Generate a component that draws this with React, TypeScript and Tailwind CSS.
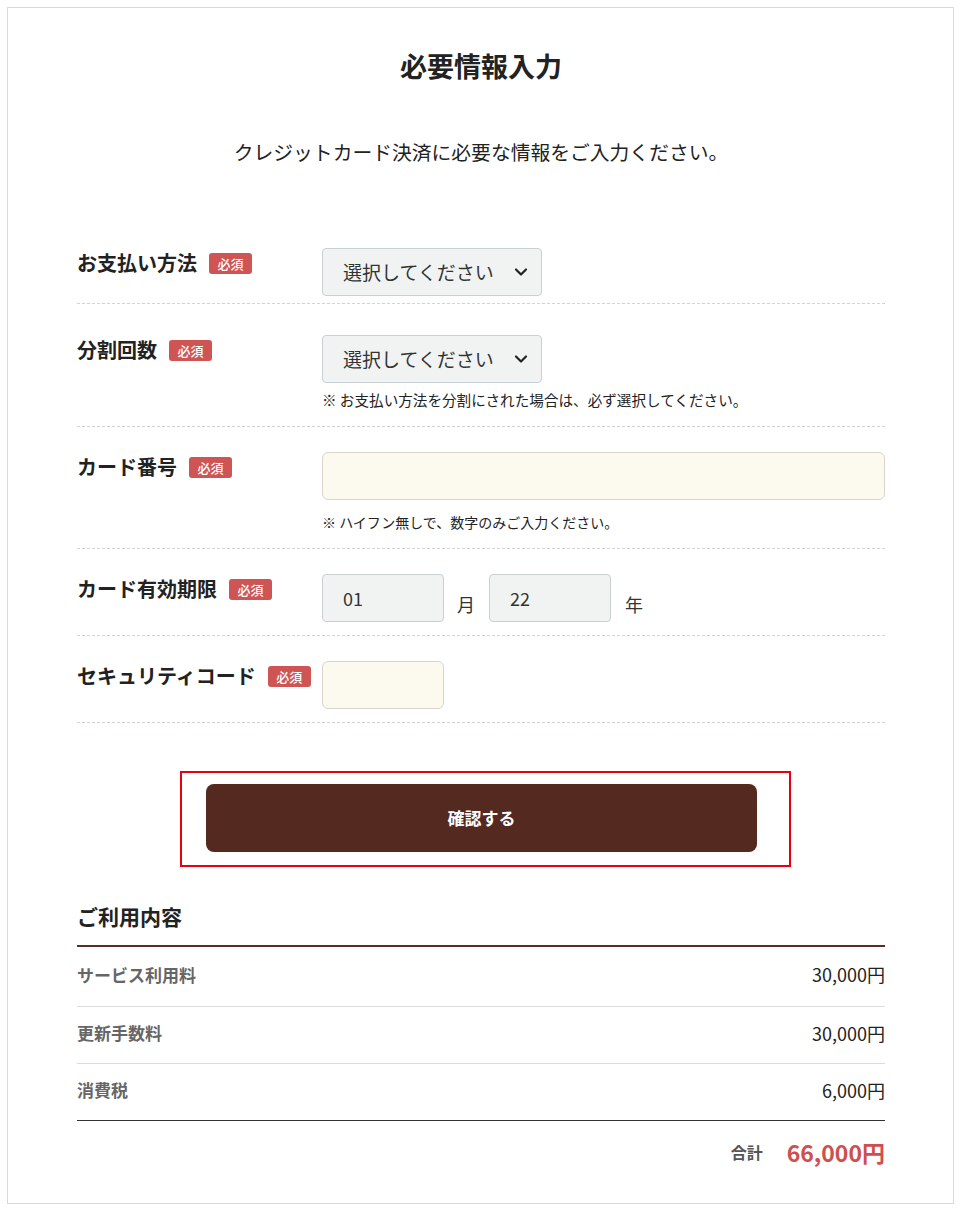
import React from 'react'
import { ChevronDown } from 'lucide-react'

function Badge() {
  return (
    <span className="inline-flex items-center justify-center w-[43px] h-[21px] rounded-[3px] bg-[#cf5555] text-white text-[13px] leading-none font-medium">
      必須
    </span>
  )
}

function Label({ text }: { text: string }) {
  return (
    <div className="w-[245px] shrink-0 flex items-center gap-3 h-[30px]">
      <span className="text-[20px] leading-[30px] font-bold text-[#222]">{text}</span>
      <Badge />
    </div>
  )
}

function SelectBox() {
  return (
    <div className="flex items-center justify-between w-[220px] h-[48px] pl-[20px] pr-[10px] rounded-[4px] border border-[#c8d0d3] bg-[#f1f3f2] text-[19px] text-[#333]">
      <span>選択してください</span>
      <ChevronDown size={20} strokeWidth={2.6} className="text-[#222]" />
    </div>
  )
}

export default function App() {
  const items = [
    { label: 'サービス利用料', price: '30,000円', h: 'h-[60px]' },
    { label: '更新手数料', price: '30,000円', h: 'h-[57px]' },
    { label: '消費税', price: '6,000円', h: 'h-[57px]' },
  ]

  return (
    <div className="font-['Noto_Sans_CJK_JP',sans-serif] bg-white min-h-[1221px] pt-[7px] pl-[7px]">
      <div className="w-[947px] h-[1197px] border border-[#d9d9d9] pl-[69px] pr-[68px] pt-[38px]">
        <h1 className="text-center text-[27px] leading-[40px] font-bold text-[#222]">必要情報入力</h1>
        <p className="mt-[51px] text-center text-[19.8px] leading-[30px] text-[#222]">
          クレジットカード決済に必要な情報をご入力ください。
        </p>

        <div className="mt-[81px]">
          {/* お支払い方法 */}
          <div className="flex pb-[7px] border-b border-dashed border-[#cfd4d6]">
            <Label text="お支払い方法" />
            <SelectBox />
          </div>

          {/* 分割回数 */}
          <div className="flex pt-[31px] pb-[15px] border-b border-dashed border-[#cfd4d6]">
            <Label text="分割回数" />
            <div>
              <SelectBox />
              <p className="mt-[6px] text-[14.6px] leading-[22px] text-[#222]">
                ※ お支払い方法を分割にされた場合は、必ず選択してください。
              </p>
            </div>
          </div>

          {/* カード番号 */}
          <div className="flex pt-[25px] pb-[15px] border-b border-dashed border-[#cfd4d6]">
            <Label text="カード番号" />
            <div className="flex-1">
              <div className="h-[48px] w-full rounded-[6px] border border-[#d9d5cc] bg-[#fcfaee]" />
              <p className="mt-[11px] text-[14px] leading-[22px] text-[#222]">
                ※ ハイフン無しで、数字のみご入力ください。
              </p>
            </div>
          </div>

          {/* カード有効期限 */}
          <div className="flex pt-[25px] pb-[13px] border-b border-dashed border-[#cfd4d6]">
            <Label text="カード有効期限" />
            <div className="flex items-end">
              <div className="flex items-center w-[122px] h-[48px] pl-[20px] rounded-[4px] border border-[#c8d0d3] bg-[#f1f3f2] text-[18px] text-[#333]">
                01
              </div>
              <span className="ml-[13px] mr-[14px] mb-[4px] text-[18px] text-[#333]">月</span>
              <div className="flex items-center w-[122px] h-[48px] pl-[20px] rounded-[4px] border border-[#c8d0d3] bg-[#f1f3f2] text-[18px] text-[#333]">
                22
              </div>
              <span className="ml-[14px] mb-[4px] text-[18px] text-[#333]">年</span>
            </div>
          </div>

          {/* セキュリティコード */}
          <div className="flex pt-[25px] pb-[13px] border-b border-dashed border-[#cfd4d6]">
            <Label text="セキュリティコード" />
            <div className="w-[122px] h-[48px] rounded-[6px] border border-[#d9d5cc] bg-[#fcfaee]" />
          </div>
        </div>

        {/* 確認ボタン */}
        <div className="mt-[48px] ml-[103px] w-[611px] h-[96px] border-2 border-[#e60012] pl-[24px] pt-[11px]">
          <button className="w-[551px] h-[68px] rounded-[8px] bg-[#54291f] text-white text-[17px] font-bold">
            確認する
          </button>
        </div>

        {/* ご利用内容 */}
        <h2 className="mt-[34px] text-[21px] leading-[30px] font-bold text-[#222]">ご利用内容</h2>
        <div className="mt-[14px] border-t-2 border-[#5a2d22]">
          {items.map((item, i) => (
            <div
              key={item.label}
              className={`flex items-center justify-between ${item.h} pb-[4px] border-b ${
                i === items.length - 1 ? 'border-[#333]' : 'border-[#dcdcdc]'
              }`}
            >
              <span className="text-[17px] font-bold text-[#666]">{item.label}</span>
              <span className="text-[18px] text-[#222]">{item.price}</span>
            </div>
          ))}
          <div className="flex items-center justify-end h-[62px]">
            <span className="text-[16px] font-bold text-[#555]">合計</span>
            <span className="ml-[24px] text-[23px] font-bold text-[#cf4e4e]">66,000円</span>
          </div>
        </div>
      </div>
    </div>
  )
}
